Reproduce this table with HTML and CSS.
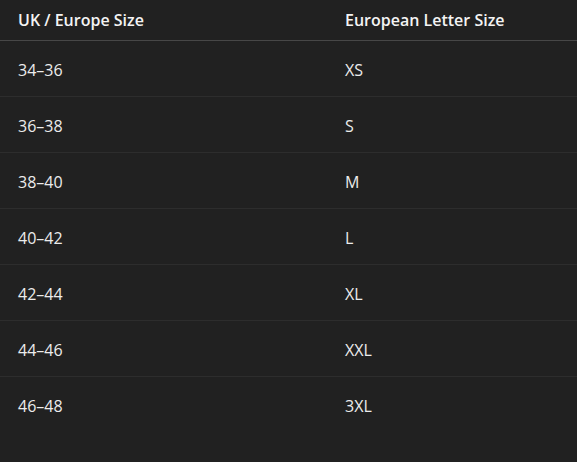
FILE: index.html
```html
<!DOCTYPE html>
<html lang="en">
<head>
<meta charset="utf-8">
<link rel="stylesheet" href="styles.css">
</head>
<body>
<table class="sizes">
  <thead>
    <tr><th class="c1">UK / Europe Size</th><th>European Letter Size</th></tr>
  </thead>
  <tbody>
    <tr><td>34–36</td><td>XS</td></tr>
    <tr><td>36–38</td><td>S</td></tr>
    <tr><td>38–40</td><td>M</td></tr>
    <tr><td>40–42</td><td>L</td></tr>
    <tr><td>42–44</td><td>XL</td></tr>
    <tr><td>44–46</td><td>XXL</td></tr>
    <tr><td>46–48</td><td>3XL</td></tr>
  </tbody>
</table>
</body>
</html>
```
FILE: styles.css
```css
html, body {
  margin: 0;
  background: #212121;
  height: 100%;
}
body {
  font-family: "Open Sans", "Noto Sans", sans-serif;
  color: #ececec;
  font-size: 16px;
}
.sizes {
  border-collapse: collapse;
  width: 100%;
  table-layout: fixed;
}
.sizes th {
  text-align: left;
  font-weight: 600;
  color: #f4f4f4;
  height: 40px;
  padding: 0 18px;
  border-bottom: 1px solid #474747;
  vertical-align: middle;
}
.sizes th.c1 {
  width: 291px;
}
.sizes td {
  height: 53px;
  padding: 2px 18px 0;
  border-bottom: 1px solid #2d2d2d;
  vertical-align: middle;
}
.sizes tbody tr:last-child td {
  border-bottom: none;
}
```
